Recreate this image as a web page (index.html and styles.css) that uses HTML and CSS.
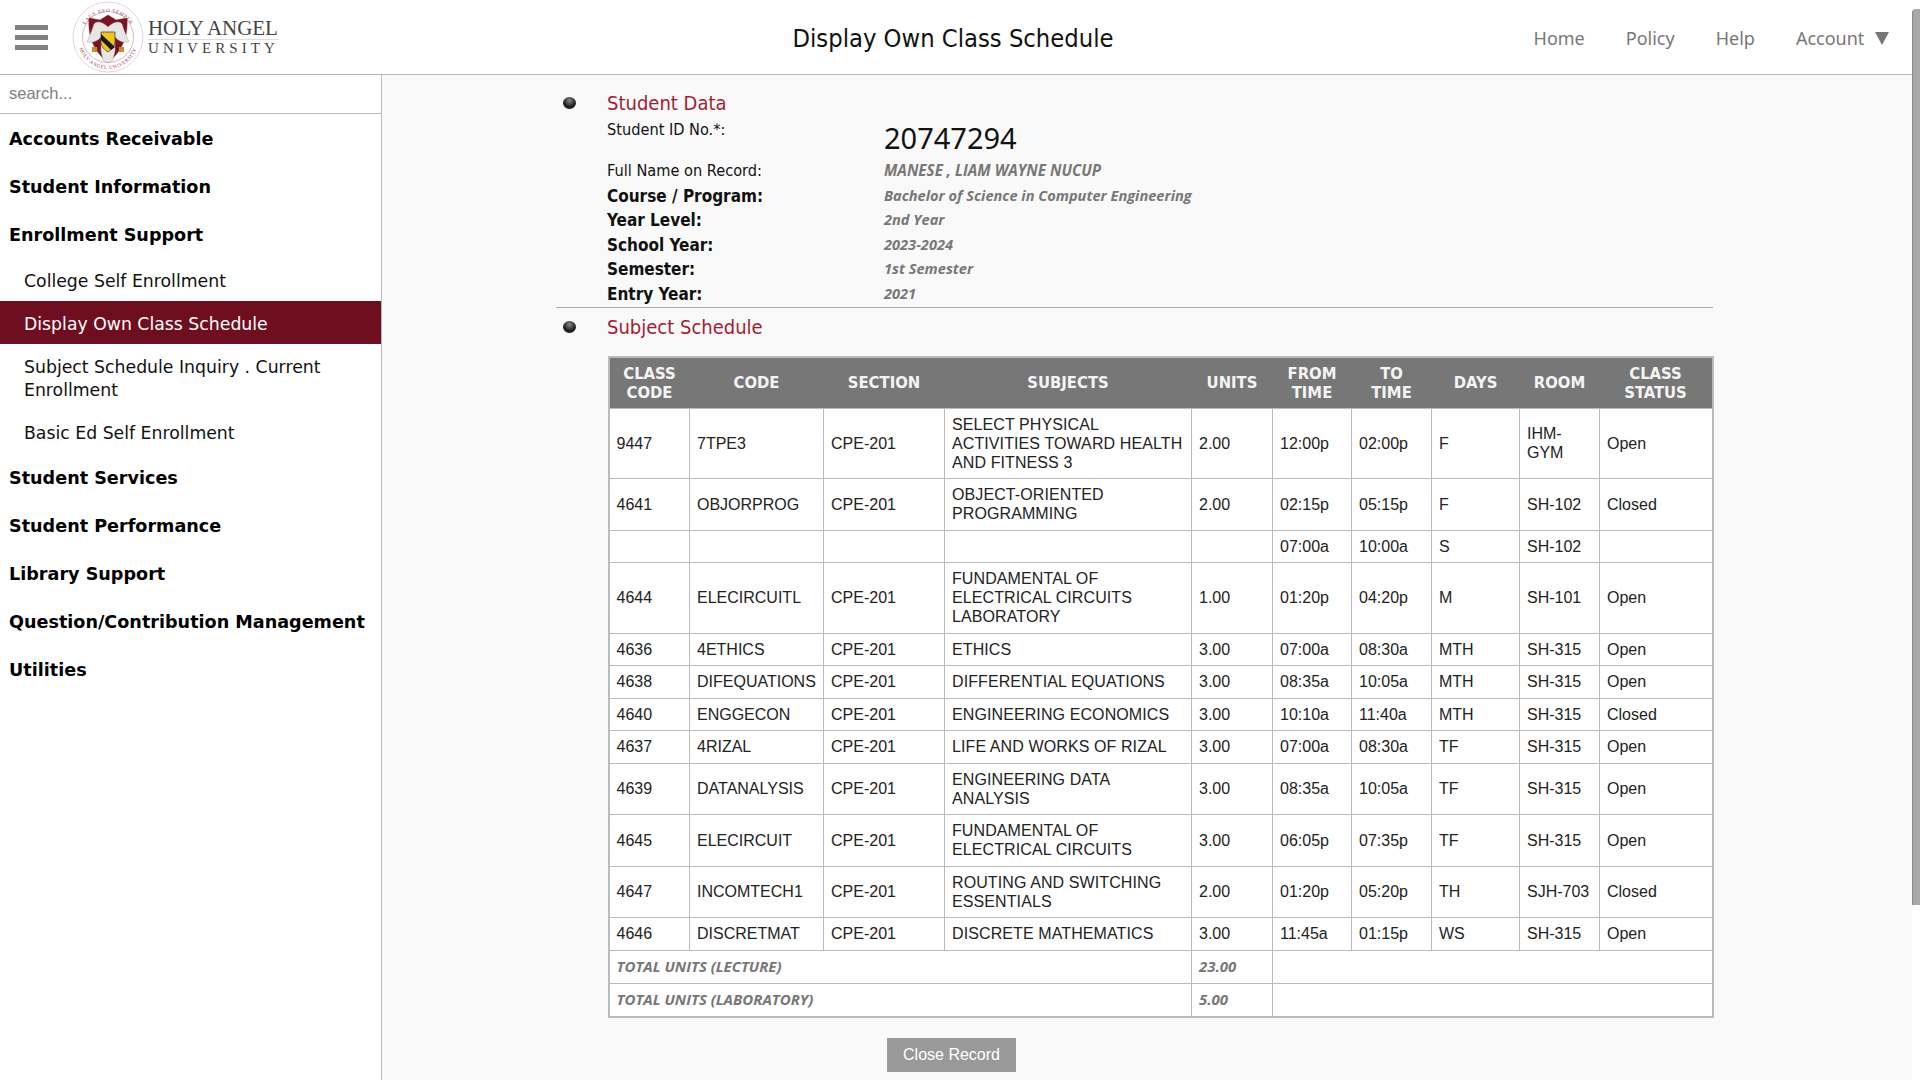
FILE: index.html
```html
<!DOCTYPE html>
<html lang="en">

<head>
    <meta charset="UTF-8">
    <meta name="viewport" content="width=device-width, initial-scale=1">
    <title>Display Own Class Schedule</title>
    <link rel="stylesheet" href="styles.css">
</head>

<body>
    <div class="page">
        <header class="topbar">
            <div class="brand">
                <div class="burger"><span></span><span></span><span></span></div>
                <svg class="seal" viewBox="0 0 72 72" aria-hidden="true">
                    <circle cx="36" cy="36" r="35" fill="#fff" stroke="#e3d6d8" stroke-width="1"/>
                    <circle cx="36" cy="36" r="25.5" fill="#fff" stroke="#d9b9bf" stroke-width="1"/>
                    <defs>
                        <path id="seal-top" d="M9 38 A27 27 0 0 1 63 38"/>
                        <path id="seal-bottom" d="M6 38 A30 30 0 0 0 66 38"/>
                    </defs>
                    <text class="seal-text"><textPath href="#seal-top" startOffset="50%" text-anchor="middle">LAUS DEO SEMPER</textPath></text>
                    <text class="seal-text"><textPath href="#seal-bottom" startOffset="50%" text-anchor="middle">HOLY ANGEL UNIVERSITY</textPath></text>
                    <path d="M17 17 L28 19 L36 14 L44 19 L55 17 C56 34 52 48 36 62 C20 48 16 34 17 17 Z" fill="#7a1222" stroke="#5a3a3a" stroke-width=".5"/>
                    <path d="M36 26 C30 20 24 20 22 23 C20 30 17 36 15 41 C21 42 26 40 29 36 L29 50 L31 59 L36 62 L41 59 L43 50 L43 36 C46 40 51 42 57 41 C55 36 52 30 50 23 C48 20 42 20 36 26 Z" fill="#e8e6e4" stroke="#9a9a9a" stroke-width=".4"/>
                    <path d="M29 31 H43 V41 C43 46 39 49 36 51 C33 49 29 46 29 41 Z" fill="#f0c419" stroke="#222" stroke-width=".6"/>
                    <path d="M29 33 L43 46 L39 49 L29 39 Z" fill="#1a1a1a"/>
                    <path d="M20 46 h5 v5 h-5 Z M47 46 h5 v5 h-5 Z" fill="#d08a2a"/>
                </svg>
                <div class="wordmark">
                    <div class="wordmark-top">HOLY ANGEL</div>
                    <div class="wordmark-bottom">UNIVERSITY</div>
                </div>
            </div>
            <div class="page-title">Display Own Class Schedule</div>
            <nav class="topnav">
                <a href="#">Home</a>
                <a href="#">Policy</a>
                <a href="#">Help</a>
                <a href="#" class="account">Account <span class="caret"></span></a>
            </nav>
        </header>

        <div class="layout">
            <aside class="sidebar">
                <div class="search">search...</div>
                <a href="#" class="menu-group">Accounts Receivable</a>
                <a href="#" class="menu-group">Student Information</a>
                <a href="#" class="menu-group">Enrollment Support</a>
                <a href="#" class="menu-item">College Self Enrollment</a>
                <a href="#" class="menu-item active">Display Own Class Schedule</a>
                <a href="#" class="menu-item">Subject Schedule Inquiry . Current Enrollment</a>
                <a href="#" class="menu-item">Basic Ed Self Enrollment</a>
                <a href="#" class="menu-group">Student Services</a>
                <a href="#" class="menu-group">Student Performance</a>
                <a href="#" class="menu-group">Library Support</a>
                <a href="#" class="menu-group">Question/Contribution Management</a>
                <a href="#" class="menu-group">Utilities</a>
            </aside>

            <main class="main-content">
                <section class="student-data">
                    <h2 class="section-title"><span class="bullet"></span>Student Data</h2>
                    <div class="info-row id-row"><span>Student ID No.*:</span><span class="student-id">20747294</span></div>
                    <div class="info-row"><span>Full Name on Record:</span><span class="value name">MANESE , LIAM WAYNE NUCUP</span></div>
                    <div class="info-row strong"><span>Course / Program:</span><span class="value">Bachelor of Science in Computer Engineering</span></div>
                    <div class="info-row strong"><span>Year Level:</span><span class="value">2nd Year</span></div>
                    <div class="info-row strong"><span>School Year:</span><span class="value">2023-2024</span></div>
                    <div class="info-row strong"><span>Semester:</span><span class="value">1st Semester</span></div>
                    <div class="info-row strong"><span>Entry Year:</span><span class="value">2021</span></div>
                </section>

                <section class="subject-schedule">
                    <h2 class="section-title"><span class="bullet"></span>Subject Schedule</h2>
                    <table class="schedule">
                        <colgroup>
                            <col class="c-class"><col class="c-code"><col class="c-section"><col class="c-subject"><col class="c-units">
                            <col class="c-from"><col class="c-to"><col class="c-days"><col class="c-room"><col class="c-status">
                        </colgroup>
                        <thead>
                            <tr>
                                <th>CLASS CODE</th><th>CODE</th><th>SECTION</th><th>SUBJECTS</th><th>UNITS</th>
                                <th>FROM TIME</th><th>TO TIME</th><th>DAYS</th><th>ROOM</th><th>CLASS STATUS</th>
                            </tr>
                        </thead>
                        <tbody>
                            <tr><td>9447</td><td>7TPE3</td><td>CPE-201</td><td>SELECT PHYSICAL ACTIVITIES TOWARD HEALTH AND FITNESS 3</td><td>2.00</td><td>12:00p</td><td>02:00p</td><td>F</td><td>IHM-GYM</td><td>Open</td></tr>
                            <tr><td>4641</td><td>OBJORPROG</td><td>CPE-201</td><td>OBJECT-ORIENTED PROGRAMMING</td><td>2.00</td><td>02:15p</td><td>05:15p</td><td>F</td><td>SH-102</td><td>Closed</td></tr>
                            <tr><td></td><td></td><td></td><td></td><td></td><td>07:00a</td><td>10:00a</td><td>S</td><td>SH-102</td><td></td></tr>
                            <tr><td>4644</td><td>ELECIRCUITL</td><td>CPE-201</td><td>FUNDAMENTAL OF ELECTRICAL CIRCUITS LABORATORY</td><td>1.00</td><td>01:20p</td><td>04:20p</td><td>M</td><td>SH-101</td><td>Open</td></tr>
                            <tr><td>4636</td><td>4ETHICS</td><td>CPE-201</td><td>ETHICS</td><td>3.00</td><td>07:00a</td><td>08:30a</td><td>MTH</td><td>SH-315</td><td>Open</td></tr>
                            <tr><td>4638</td><td>DIFEQUATIONS</td><td>CPE-201</td><td>DIFFERENTIAL EQUATIONS</td><td>3.00</td><td>08:35a</td><td>10:05a</td><td>MTH</td><td>SH-315</td><td>Open</td></tr>
                            <tr><td>4640</td><td>ENGGECON</td><td>CPE-201</td><td>ENGINEERING ECONOMICS</td><td>3.00</td><td>10:10a</td><td>11:40a</td><td>MTH</td><td>SH-315</td><td>Closed</td></tr>
                            <tr><td>4637</td><td>4RIZAL</td><td>CPE-201</td><td>LIFE AND WORKS OF RIZAL</td><td>3.00</td><td>07:00a</td><td>08:30a</td><td>TF</td><td>SH-315</td><td>Open</td></tr>
                            <tr><td>4639</td><td>DATANALYSIS</td><td>CPE-201</td><td>ENGINEERING DATA ANALYSIS</td><td>3.00</td><td>08:35a</td><td>10:05a</td><td>TF</td><td>SH-315</td><td>Open</td></tr>
                            <tr><td>4645</td><td>ELECIRCUIT</td><td>CPE-201</td><td>FUNDAMENTAL OF ELECTRICAL CIRCUITS</td><td>3.00</td><td>06:05p</td><td>07:35p</td><td>TF</td><td>SH-315</td><td>Open</td></tr>
                            <tr><td>4647</td><td>INCOMTECH1</td><td>CPE-201</td><td>ROUTING AND SWITCHING ESSENTIALS</td><td>2.00</td><td>01:20p</td><td>05:20p</td><td>TH</td><td>SJH-703</td><td>Closed</td></tr>
                            <tr><td>4646</td><td>DISCRETMAT</td><td>CPE-201</td><td>DISCRETE MATHEMATICS</td><td>3.00</td><td>11:45a</td><td>01:15p</td><td>WS</td><td>SH-315</td><td>Open</td></tr>
                            <tr class="total"><td colspan="4">TOTAL UNITS (LECTURE)</td><td>23.00</td><td colspan="5"></td></tr>
                            <tr class="total"><td colspan="4">TOTAL UNITS (LABORATORY)</td><td>5.00</td><td colspan="5"></td></tr>
                        </tbody>
                    </table>
                </section>

                <button class="close-btn">Close Record</button>
            </main>
        </div>
    </div>

    <!-- scrollbar drawn by hand, the page itself does not scroll -->
    <div class="scrollbar"><div class="thumb"></div></div>
</body>

</html>
```

FILE: styles.css
```css
/* Reset */
* {
    margin: 0;
    padding: 0;
    box-sizing: border-box;
}

html, body {
    height: 100%;
    overflow: hidden;
}

body {
    display: flex;
    font-family: "DejaVu Sans Condensed", "DejaVu Sans", sans-serif;
    font-size: 16px;
    color: #111;
    background-color: #f9f9f9;
}

a {
    text-decoration: none;
    color: inherit;
}

.page {
    flex: 1;
    min-width: 0;
    display: flex;
    flex-direction: column;
    height: 1080px;
}

/* Top bar */
.topbar {
    height: 75px;
    flex-shrink: 0;
    display: flex;
    align-items: center;
    background-color: #fff;
    border-bottom: 1px solid #b5b5b5;
}

.brand {
    width: 381px;
    display: flex;
    align-items: center;
    flex-shrink: 0;
}

.burger {
    width: 33px;
    margin-left: 15px;
    margin-right: 24px;
    display: flex;
    flex-direction: column;
    gap: 5px;
}

.burger span {
    height: 5px;
    background-color: #808080;
}

.seal {
    width: 72px;
    height: 72px;
    flex-shrink: 0;
}

.seal-text {
    font-family: "Liberation Serif", serif;
    font-size: 5px;
    letter-spacing: .6px;
    fill: #a8384a;
}

.wordmark {
    margin-left: 4px;
    font-family: "Liberation Serif", serif;
    color: #444;
}

.wordmark-top {
    font-size: 21px;
    line-height: 22px;
    letter-spacing: -.1px;
    border-bottom: 1px solid #ddd;
}

.wordmark-bottom {
    font-size: 15px;
    line-height: 17px;
    letter-spacing: 4.1px;
    white-space: nowrap;
}

.page-title {
    flex-shrink: 0;
    width: 642px;
    margin-left: 251px;
    margin-right: auto;
    padding-top: 2px;
    font-size: 25.3px;
    text-align: center;
}

.topnav {
    display: flex;
    gap: 41px;
    margin-right: 23px;
    padding-top: 1px;
    font-family: "Noto Sans", sans-serif;
    font-size: 18px;
    color: #777;
}

.caret {
    display: inline-block;
    width: 0;
    height: 0;
    margin-left: 6px;
    border-left: 7px solid transparent;
    border-right: 7px solid transparent;
    border-top: 13px solid #777;
}

/* Sidebar */
.layout {
    flex: 1;
    display: flex;
    min-height: 0;
}

.sidebar {
    width: 382px;
    flex-shrink: 0;
    background-color: #fff;
    border-right: 1.5px solid #bbb;
    font-family: "DejaVu Sans", sans-serif;
}

.search {
    height: 39px;
    padding-left: 9px;
    line-height: 37px;
    font-family: "Liberation Sans", sans-serif;
    font-size: 16.5px;
    color: #808080;
    border-bottom: 1.5px solid #bbb;
}

.menu-group {
    display: block;
    height: 48px;
    line-height: 50px;
    padding-left: 9px;
    font-size: 17.6px;
    font-weight: 700;
    color: #000;
    white-space: nowrap;
}

.menu-item {
    display: block;
    padding: 12px 24px 8px;
    line-height: 23px;
    font-size: 17.3px;
    color: #111;
}

.menu-item.active {
    background-color: #6f0e1f;
    color: #fff;
}

/* Main content */
.main-content {
    flex: 1;
    min-width: 0;
    padding-top: 16px;
    padding-left: 174px;
}

.section-title {
    display: flex;
    align-items: center;
    height: 24px;
    font-size: 20px;
    font-weight: 400;
    color: #a51c30;
}

.bullet {
    width: 13px;
    height: 12px;
    margin-left: 7px;
    margin-right: 31px;
    border-radius: 50%;
    background: radial-gradient(circle at 50% 30%, #888, #222 55%, #111);
}

.student-data {
    width: 1157px;
    height: 217px;
    border-bottom: 1px solid #aaa;
}

.info-row {
    display: grid;
    grid-template-columns: 277px 1fr;
    align-items: center;
    height: 24.5px;
    padding-left: 51px;
    font-size: 16.2px;
}

.id-row {
    height: 43px;
    align-items: start;
    padding-top: 5px;
}

.strong {
    position: relative;
    top: 1px;
}

.strong span:first-child {
    font-size: 17px;
    font-weight: 700;
}

.value {
    font-family: "Open Sans", sans-serif;
    font-size: 14.6px;
    font-weight: 700;
    font-style: italic;
    color: #777;
}

.strong .value {
    margin-top: -2px;
}

.value.name {
    font-size: 15.2px;
}

.student-id {
    margin-top: -1px;
    font-family: "Noto Sans", sans-serif;
    font-size: 29px;
    line-height: 38px;
    color: #111;
}

.subject-schedule {
    padding-top: 7px;
}

/* Schedule table */
.schedule {
    width: 1105px;
    margin-top: 17px;
    margin-left: 51.5px;
    table-layout: fixed;
    border-collapse: collapse;
    border: 2px solid #bbb;
    background-color: #fff;
}

.c-class { width: 81px; }
.c-code { width: 134px; }
.c-section { width: 121px; }
.c-subject { width: 247px; }
.c-units { width: 81px; }
.c-from { width: 79px; }
.c-to { width: 80px; }
.c-days { width: 88px; }
.c-room { width: 80px; }
.c-status { width: 113px; }

.schedule th {
    height: 51px;
    padding: 3px 7px;
    background-color: #777;
    color: #f4f4f4;
    font-size: 16.5px;
    font-weight: 700;
    line-height: 19px;
    text-align: center;
}

.schedule td {
    padding: 6.25px 7px;
    border: 1px solid #bbb;
    font-family: "Liberation Sans", sans-serif;
    font-size: 16px;
    line-height: 19px;
    color: #222;
}

.schedule td:nth-child(4) {
    letter-spacing: .1px;
}

.schedule .total td {
    padding: 6.5px 7px;
    font-family: "Open Sans", sans-serif;
    font-size: 15px;
    font-weight: 700;
    font-style: italic;
    color: #777;
    letter-spacing: 0;
}

.close-btn {
    display: block;
    width: 129px;
    height: 34px;
    margin-top: 20px;
    margin-left: 331px;
    border: none;
    background-color: #999;
    color: #fff;
    font-family: "Liberation Sans", sans-serif;
    font-size: 16px;
}

/* Hand drawn scrollbar */
.scrollbar {
    width: 8px;
    flex-shrink: 0;
    height: 1080px;
    padding-top: 9px;
    background-color: #fff;
}

.thumb {
    height: 896px;
    background-color: #a8a8a8;
    border-left: 1px solid #858a94;
    border-top-left-radius: 4px;
}
```
